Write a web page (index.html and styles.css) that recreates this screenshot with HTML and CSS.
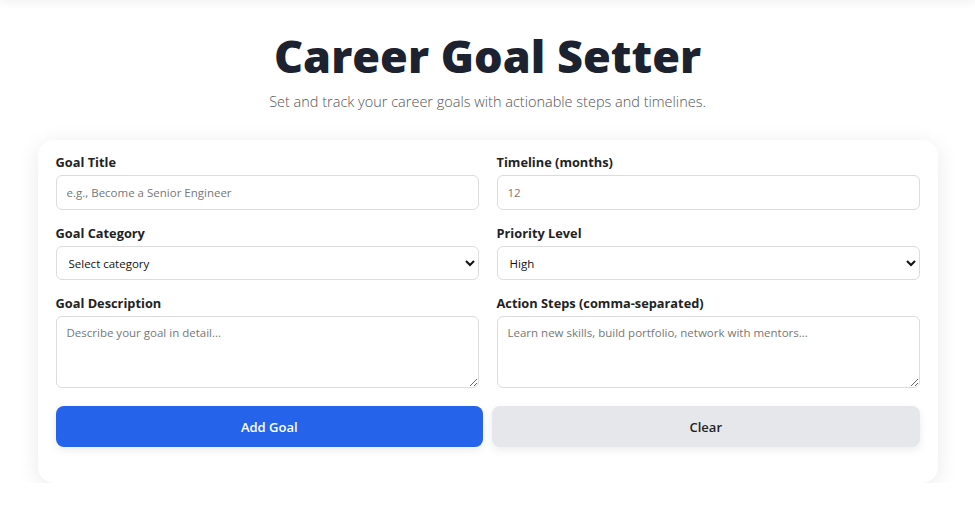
FILE: index.html
```html
<!DOCTYPE html>
<html lang="en">
<head>
<meta charset="utf-8">
<title>Career Goal Setter</title>
<link rel="stylesheet" href="styles.css">
</head>
<body>
<div class="topbar"></div>
<main class="page">
  <header class="hero">
    <h1 class="title">Career Goal Setter</h1>
    <p class="subtitle">Set and track your career goals with actionable steps and timelines.</p>
  </header>
  <section class="card">
    <form class="form">
      <div class="grid">
        <div class="field">
          <label class="label">Goal Title</label>
          <input class="input" type="text" placeholder="e.g., Become a Senior Engineer">
        </div>
        <div class="field">
          <label class="label">Timeline (months)</label>
          <input class="input" type="number" placeholder="12">
        </div>
        <div class="field">
          <label class="label">Goal Category</label>
          <select class="input select">
            <option>Select category</option>
          </select>
        </div>
        <div class="field">
          <label class="label">Priority Level</label>
          <select class="input select">
            <option>High</option>
          </select>
        </div>
        <div class="field">
          <label class="label">Goal Description</label>
          <textarea class="input textarea" placeholder="Describe your goal in detail..."></textarea>
        </div>
        <div class="field">
          <label class="label">Action Steps (comma-separated)</label>
          <textarea class="input textarea" placeholder="Learn new skills, build portfolio, network with mentors..."></textarea>
        </div>
      </div>
      <div class="actions">
        <button type="button" class="btn btn-primary">Add Goal</button>
        <button type="button" class="btn btn-secondary">Clear</button>
      </div>
    </form>
  </section>
</main>
</body>
</html>
```
FILE: styles.css
```css
* { box-sizing: border-box; }
html, body { margin: 0; padding: 0; }
body {
  background: #ffffff;
  font-family: "Open Sans", "DejaVu Sans", sans-serif;
  color: #1f2430;
  overflow: hidden;
}
.topbar {
  height: 0;
  box-shadow: 0 0 8px 1px rgba(0,0,0,0.18);
}
.page {
  width: 900px;
  margin: 0 auto;
  padding-top: 28px;
}
.hero { text-align: center; }
.title {
  margin: 0;
  font-size: 45px;
  font-weight: 800;
  line-height: 56px;
  color: #1c2230;
  letter-spacing: 0;
}
.subtitle {
  margin: 8px 0 0;
  font-size: 14.5px;
  font-weight: 300;
  color: #555;
  line-height: 20px;
}
.card {
  margin-top: 28px;
  background: #fff;
  border-radius: 16px;
  box-shadow: 0 4px 22px rgba(0,0,0,0.09);
  padding: 14px 18px 36px;
}
.grid {
  display: grid;
  grid-template-columns: 1fr 1fr;
  column-gap: 18px;
  row-gap: 15px;
}
.field { display: flex; flex-direction: column; }
.label {
  font-size: 12.8px;
  font-weight: 700;
  color: #222;
  line-height: 17px;
  margin-bottom: 4px;
}
.input {
  height: 35px;
  border: 1px solid #dcdcdc;
  border-radius: 6px;
  padding: 0 10px;
  font-family: inherit;
  font-size: 11.5px;
  color: #111;
  background: #fff;
  outline: none;
}
.input::placeholder { color: #777; }
.select { padding: 0 8px; height: 34px; }
.textarea {
  height: 72px;
  padding: 8px 10px;
  resize: vertical;
}
.actions {
  display: flex;
  gap: 9px;
  margin-top: 18px;
}
.btn {
  flex: 1;
  height: 41px;
  border: 0;
  border-radius: 8px;
  font-family: inherit;
  font-size: 13px;
  font-weight: 600;
  box-shadow: 0 3px 8px rgba(0,0,0,0.08);
}
.btn-primary { background: #2563eb; color: #fff; }
.btn-secondary { background: #e5e7eb; color: #222; }
```
